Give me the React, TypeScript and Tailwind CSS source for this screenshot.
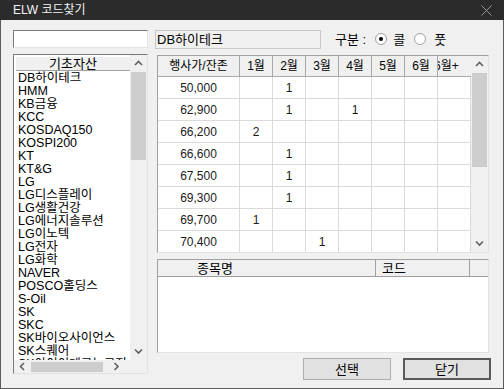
import React from 'react';

const assets = [
  'DB하이테크', 'HMM', 'KB금융', 'KCC', 'KOSDAQ150', 'KOSPI200', 'KT', 'KT&G', 'LG',
  'LG디스플레이', 'LG생활건강', 'LG에너지솔루션', 'LG이노텍', 'LG전자', 'LG화학', 'NAVER',
  'POSCO홀딩스', 'S-Oil', 'SK', 'SKC', 'SK바이오사이언스', 'SK스퀘어', 'SK아이이테크놀로지'
];

const months = ['1월', '2월', '3월', '4월', '5월', '6월'];

const rows = [
  { price: '50,000', m: ['', '1', '', '', '', '', ''] },
  { price: '62,900', m: ['', '1', '', '1', '', '', ''] },
  { price: '66,200', m: ['2', '', '', '', '', '', ''] },
  { price: '66,600', m: ['', '1', '', '', '', '', ''] },
  { price: '67,500', m: ['', '1', '', '', '', '', ''] },
  { price: '69,300', m: ['', '1', '', '', '', '', ''] },
  { price: '69,700', m: ['1', '', '', '', '', '', ''] },
  { price: '70,400', m: ['', '', '1', '', '', '', ''] }
];

const gulim = { fontFamily: '"Liberation Sans", "Noto Sans CJK KR", sans-serif' };

const Chevron: React.FC<{ dir: 'up' | 'down' | 'left' | 'right' }> = ({ dir }) => {
  const d = {
    up: 'M1 5 L4.5 1.5 L8 5',
    down: 'M1 1.5 L4.5 5 L8 1.5',
    left: 'M5 1 L1.5 4.5 L5 8',
    right: 'M1.5 1 L5 4.5 L1.5 8'
  }[dir];
  const horiz = dir === 'left' || dir === 'right';
  return (
    <svg width={horiz ? 7 : 9} height={horiz ? 9 : 7} viewBox={horiz ? '0 0 7 9' : '0 0 9 7'} fill="none">
      <path d={d} stroke="#606060" strokeWidth="1.6" />
    </svg>
  );
};

const VScroll: React.FC<{ thumbTop: number; thumbH: number }> = ({ thumbTop, thumbH }) => (
  <div className="w-[17px] h-full bg-[#f0f0f0] flex flex-col">
    <div className="h-[17px] flex items-center justify-center shrink-0">
      <Chevron dir="up" />
    </div>
    <div className="flex-1 relative">
      <div
        className="absolute left-[1px] w-[15px] bg-[#cdcdcd]"
        style={{ top: thumbTop, height: thumbH }}
      />
    </div>
    <div className="h-[17px] flex items-center justify-center shrink-0">
      <Chevron dir="down" />
    </div>
  </div>
);

const Radio: React.FC<{ checked?: boolean }> = ({ checked }) => (
  <span className="w-[12px] h-[12px] rounded-full border border-[#a0a0a0] bg-white flex items-center justify-center">
    {checked && <span className="w-[4px] h-[4px] rounded-full bg-black" />}
  </span>
);

export default function App() {
  return (
    <div className="w-[504px] h-[389px] bg-[#f0f0f0] flex flex-col text-black" style={gulim}>
      {/* title bar */}
      <div className="h-[20px] bg-[#2b2b2b] flex items-center justify-between pl-[13px] pr-[12px] shrink-0">
        <span className="text-[12px] text-[#f4f4f4] leading-none">ELW 코드찾기</span>
        <svg width="11" height="11" viewBox="0 0 11 11">
          <path d="M0.5 0.5 L10.5 10.5 M10.5 0.5 L0.5 10.5" stroke="#9a9a9a" strokeWidth="1" />
        </svg>
      </div>

      <div className="flex-1 border-x border-b border-[#5c5c5c] pl-[12px] pt-[10px]">
        {/* search row */}
        <div className="flex items-center h-[18px]">
          <div className="w-[135px] h-[18px] bg-white border border-[#7a7a7a] border-r-[#e3e3e3] border-b-[#e3e3e3]" />
          <div className="ml-[7px] w-[166px] h-[19px] border border-[#c8c8c8] bg-[#f0f0f0] flex items-center pl-[1px] text-[13px] leading-none">
            DB하이테크
          </div>
          <div className="ml-[14px] flex items-center text-[13px] leading-none">
            <span>구분 :</span>
            <span className="ml-[9px]"><Radio checked /></span>
            <span className="ml-[6px]">콜</span>
            <span className="ml-[9px]"><Radio /></span>
            <span className="ml-[8px]">풋</span>
          </div>
        </div>

        <div className="flex mt-[6px]">
          {/* left asset list */}
          <div className="w-[135px] h-[320px] border border-[#7a7a7a] border-r-[#e3e3e3] border-b-[#e3e3e3] bg-white flex flex-col">
            <div className="flex h-[305px]">
              <div className="flex-1 overflow-hidden pl-[2px] pt-[2px]">
                <div className="h-[14px] bg-[#f0f0f0] border-b border-[#a0a0a0] flex items-center justify-center text-[13px] leading-none">
                  기초자산
                </div>
                <div className="pl-[2px] pt-[1px]">
                  {assets.map((a, i) => (
                    <div key={i} className="h-[13px] text-[12.5px] leading-[13px] whitespace-nowrap">
                      {a}
                    </div>
                  ))}
                </div>
              </div>
              <VScroll thumbTop={0} thumbH={88} />
            </div>
            <div className="flex h-[13px] bg-[#f0f0f0]">
              <div className="w-[116px] flex items-center">
                <div className="w-[17px] flex justify-center"><Chevron dir="left" /></div>
                <div className="w-[72px] h-[10px] bg-[#cdcdcd]" />
                <div className="flex-1 flex justify-center"><Chevron dir="right" /></div>
              </div>
              <div className="flex-1 bg-[#f0f0f0]" />
            </div>
          </div>

          {/* right side */}
          <div className="ml-[9px] w-[332px] flex flex-col mt-[1px]">
            {/* grid */}
            <div className="h-[198px] border border-[#a0a0a0] border-r-[#e3e3e3] border-b-[#e3e3e3] bg-white flex text-[12px]">
              <div className="flex-1 overflow-hidden">
                <div className="flex h-[21px] bg-[#f0f0f0]">
                  <div className="w-[82px] border-r border-b border-[#a8a8a8] flex items-center justify-center">행사가/잔존</div>
                  {months.map((m) => (
                    <div key={m} className="w-[33px] border-r border-b border-[#a8a8a8] flex items-center justify-center">{m}</div>
                  ))}
                  <div className="w-[33px] border-b border-[#a8a8a8] flex items-center overflow-hidden">
                    <span className="ml-[-4px] whitespace-nowrap">6월+</span>
                  </div>
                </div>
                {rows.map((r) => (
                  <div key={r.price} className="flex h-[22px] text-[#1a1a1a]">
                    <div className="w-[82px] border-r border-b border-[#dadada] flex items-center justify-center">{r.price}</div>
                    {r.m.map((v, j) => (
                      <div key={j} className="w-[33px] border-r border-b border-[#dadada] flex items-center justify-center">{v}</div>
                    ))}
                  </div>
                ))}
              </div>
              <VScroll thumbTop={0} thumbH={94} />
            </div>

            {/* bottom list */}
            <div className="mt-[6px] h-[94px] border border-[#a0a0a0] border-r-[#e3e3e3] border-b-[#e3e3e3] bg-white">
              <div className="flex h-[17px] bg-[#f0f0f0] text-[13px] leading-none">
                <div className="w-[218px] border-r border-b border-[#a0a0a0] flex items-center pl-[39px]">종목명</div>
                <div className="w-[94px] border-r border-b border-[#a0a0a0] flex items-center pl-[6px]">코드</div>
                <div className="flex-1 border-b border-[#a0a0a0]" />
              </div>
            </div>

            {/* buttons */}
            <div className="mt-[5px] flex justify-end gap-[12px] mr-[-2px] text-[13px]">
              <button className="w-[88px] h-[22px] bg-[#e1e1e1] border border-[#adadad] flex items-center justify-center leading-none">선택</button>
              <button className="w-[88px] h-[22px] bg-[#e1e1e1] border-2 border-[#5a5a5a] flex items-center justify-center leading-none">닫기</button>
            </div>
          </div>
        </div>
      </div>
    </div>
  );
}
